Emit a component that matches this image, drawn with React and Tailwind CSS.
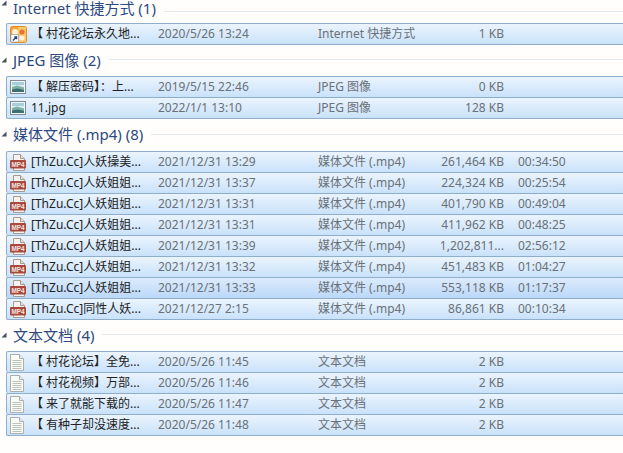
import React from "react";

function Arrow() {
  return (
    <svg width="6" height="6" viewBox="0 0 6 6" className="ml-[1px] mr-[6px] shrink-0">
      <path d="M5.5 0.5V5.5H0.5Z" fill="#45525e" />
    </svg>
  );
}

function LinkIcon() {
  return (
    <svg width="17" height="17" viewBox="0 0 17 17" className="block">
      <rect x="0.5" y="0.5" width="16" height="16" rx="2" fill="#f7a531" stroke="#e2892a" />
      <rect x="8" y="1" width="8" height="15" fill="#f9c868" />
      <circle cx="5" cy="6" r="3" fill="#fff3df" />
      <circle cx="12" cy="6" r="2.6" fill="#ef6f2c" />
      <circle cx="12" cy="12" r="2.6" fill="#fff1d9" />
      <rect x="1" y="8.5" width="7.5" height="7.5" fill="#fff" stroke="#8a97a8" strokeWidth="0.6" />
      <path d="M3 14.5L6.2 11M4.3 10.8H6.6V13.2" fill="none" stroke="#1c3f8f" strokeWidth="1.3" />
    </svg>
  );
}

function ImageIcon() {
  return (
    <svg width="16" height="14" viewBox="0 0 16 14" className="block">
      <rect x="0.5" y="0.5" width="15" height="13" fill="#f3f6f8" stroke="#7f8c96" />
      <rect x="2" y="2" width="12" height="10" fill="#dcecef" />
      <rect x="2" y="2" width="12" height="3" fill="#a5d0da" />
      <path d="M2 7L7 5.5L14 7.5V12H2Z" fill="#7fb0a4" />
      <path d="M2 9.5L8 8.5L14 10V12H2Z" fill="#3d6f72" />
    </svg>
  );
}

function VideoIcon() {
  return (
    <svg width="17" height="17" viewBox="0 0 17 17" className="block">
      <path d="M3.5 0.5H10.5L14.5 4.5V16.5H3.5Z" fill="#f7f2ee" stroke="#a39a94" />
      <path d="M10.5 0.5V4.5H14.5" fill="#e9e0da" stroke="#a39a94" />
      <rect x="0" y="6" width="16" height="8.5" rx="1" fill="#a9483c" />
      <text x="8" y="12.8" textAnchor="middle" fontSize="6.4" fontWeight="700" fill="#f6e6e0" fontFamily="'Liberation Sans', sans-serif">MP4</text>
    </svg>
  );
}

function TextIcon() {
  return (
    <svg width="14" height="17" viewBox="0 0 14 17" className="block">
      <path d="M0.5 0.5H9.5L13.5 4.5V16.5H0.5Z" fill="#fbfbf6" stroke="#a9afb3" />
      <path d="M9.5 0.5V4.5H13.5" fill="#eceee8" stroke="#a9afb3" />
      <path d="M2.5 6.5H11.5M2.5 8.5H11.5M2.5 10.5H11.5M2.5 12.5H11.5M2.5 14.5H11.5" stroke="#bcc2b8" strokeWidth="1" />
    </svg>
  );
}

const icons = {
  link: <LinkIcon />,
  image: <ImageIcon />,
  video: <VideoIcon />,
  text: <TextIcon />,
};

const groups = [
  {
    title: "Internet 快捷方式 (1)",
    head: "h-[23px] items-start",
    icon: "link",
    rows: [["【 村花论坛永久地...", "2020/5/26 13:24", "Internet 快捷方式", "1 KB", ""]],
  },
  {
    title: "JPEG 图像 (2)",
    head: "h-[31px] items-center pb-[2px]",
    icon: "image",
    rows: [
      ["【 解压密码】：上...", "2019/5/15 22:46", "JPEG 图像", "0 KB", ""],
      ["11.jpg", "2022/1/1 13:10", "JPEG 图像", "128 KB", ""],
    ],
  },
  {
    title: "媒体文件 (.mp4) (8)",
    head: "h-[32px] items-center pb-[2px]",
    icon: "video",
    rows: [
      ["[ThZu.Cc]人妖操美...", "2021/12/31 13:29", "媒体文件 (.mp4)", "261,464 KB", "00:34:50"],
      ["[ThZu.Cc]人妖姐姐...", "2021/12/31 13:37", "媒体文件 (.mp4)", "224,324 KB", "00:25:54"],
      ["[ThZu.Cc]人妖姐姐...", "2021/12/31 13:31", "媒体文件 (.mp4)", "401,790 KB", "00:49:04"],
      ["[ThZu.Cc]人妖姐姐...", "2021/12/31 13:31", "媒体文件 (.mp4)", "411,962 KB", "00:48:25"],
      ["[ThZu.Cc]人妖姐姐...", "2021/12/31 13:39", "媒体文件 (.mp4)", "1,202,811...", "02:56:12"],
      ["[ThZu.Cc]人妖姐姐...", "2021/12/31 13:32", "媒体文件 (.mp4)", "451,483 KB", "01:04:27"],
      ["[ThZu.Cc]人妖姐姐...", "2021/12/31 13:33", "媒体文件 (.mp4)", "553,118 KB", "01:17:37", true],
      ["[ThZu.Cc]同性人妖...", "2021/12/27 2:15", "媒体文件 (.mp4)", "86,861 KB", "00:10:34"],
    ],
  },
  {
    title: "文本文档 (4)",
    head: "h-[31px] items-center pb-[2px]",
    icon: "text",
    rows: [
      ["【 村花论坛】全免...", "2020/5/26 11:45", "文本文档", "2 KB", ""],
      ["【 村花视频】万部...", "2020/5/26 11:46", "文本文档", "2 KB", ""],
      ["【 来了就能下载的...", "2020/5/26 11:47", "文本文档", "2 KB", ""],
      ["【 有种子却没速度...", "2020/5/26 11:48", "文本文档", "2 KB", ""],
    ],
  },
];

function Row({ icon, row, last }) {
  const [name, date, type, size, dur, hot] = row;
  const bg = hot
    ? "bg-gradient-to-b from-[#dcebfc] to-[#bbd8f8]"
    : "bg-gradient-to-b from-[#ebf4fd] to-[#c9e2fa]";
  return (
    <div
      className={`ml-[6px] box-border flex items-center rounded-l-[2px] border-l border-t border-[#8eaecb] ${last ? "h-[22px] border-b" : "h-[21px]"} ${bg}`}
    >
      <div className="w-[24px] h-[20px] shrink-0 flex items-center pl-[3px]">{icons[icon]}</div>
      <div className="w-[127px] shrink-0 whitespace-nowrap overflow-hidden text-[#222]">{name}</div>
      <div className="w-[160px] shrink-0 whitespace-nowrap text-[#6b7178]">{date}</div>
      <div className="w-[110px] shrink-0 whitespace-nowrap text-[#6b7178]">{type}</div>
      <div className="w-[76px] shrink-0 whitespace-nowrap text-right text-[#6b7178]">{size}</div>
      <div className="ml-[14px] whitespace-nowrap text-[#6b7178]">{dur}</div>
    </div>
  );
}

function Group({ g }) {
  return (
    <section>
      <div className={`flex box-border ${g.head}`}>
        <Arrow />
        <span className="text-[15px] leading-[16px] text-[#2c4a80] whitespace-nowrap">{g.title}</span>
        <div className="ml-[8px] h-px flex-1 bg-[#e4e9ee] self-center" />
      </div>
      {g.rows.map((r, i) => (
        <Row key={i} icon={g.icon} row={r} last={i === g.rows.length - 1} />
      ))}
    </section>
  );
}

export default function App() {
  return (
    <div className="w-[623px] h-[453px] overflow-hidden bg-[#fffefd] text-[12px] font-['Noto_Sans','Noto_Sans_CJK_SC',sans-serif]">
      {groups.map((g, i) => (
        <Group key={i} g={g} />
      ))}
    </div>
  );
}
